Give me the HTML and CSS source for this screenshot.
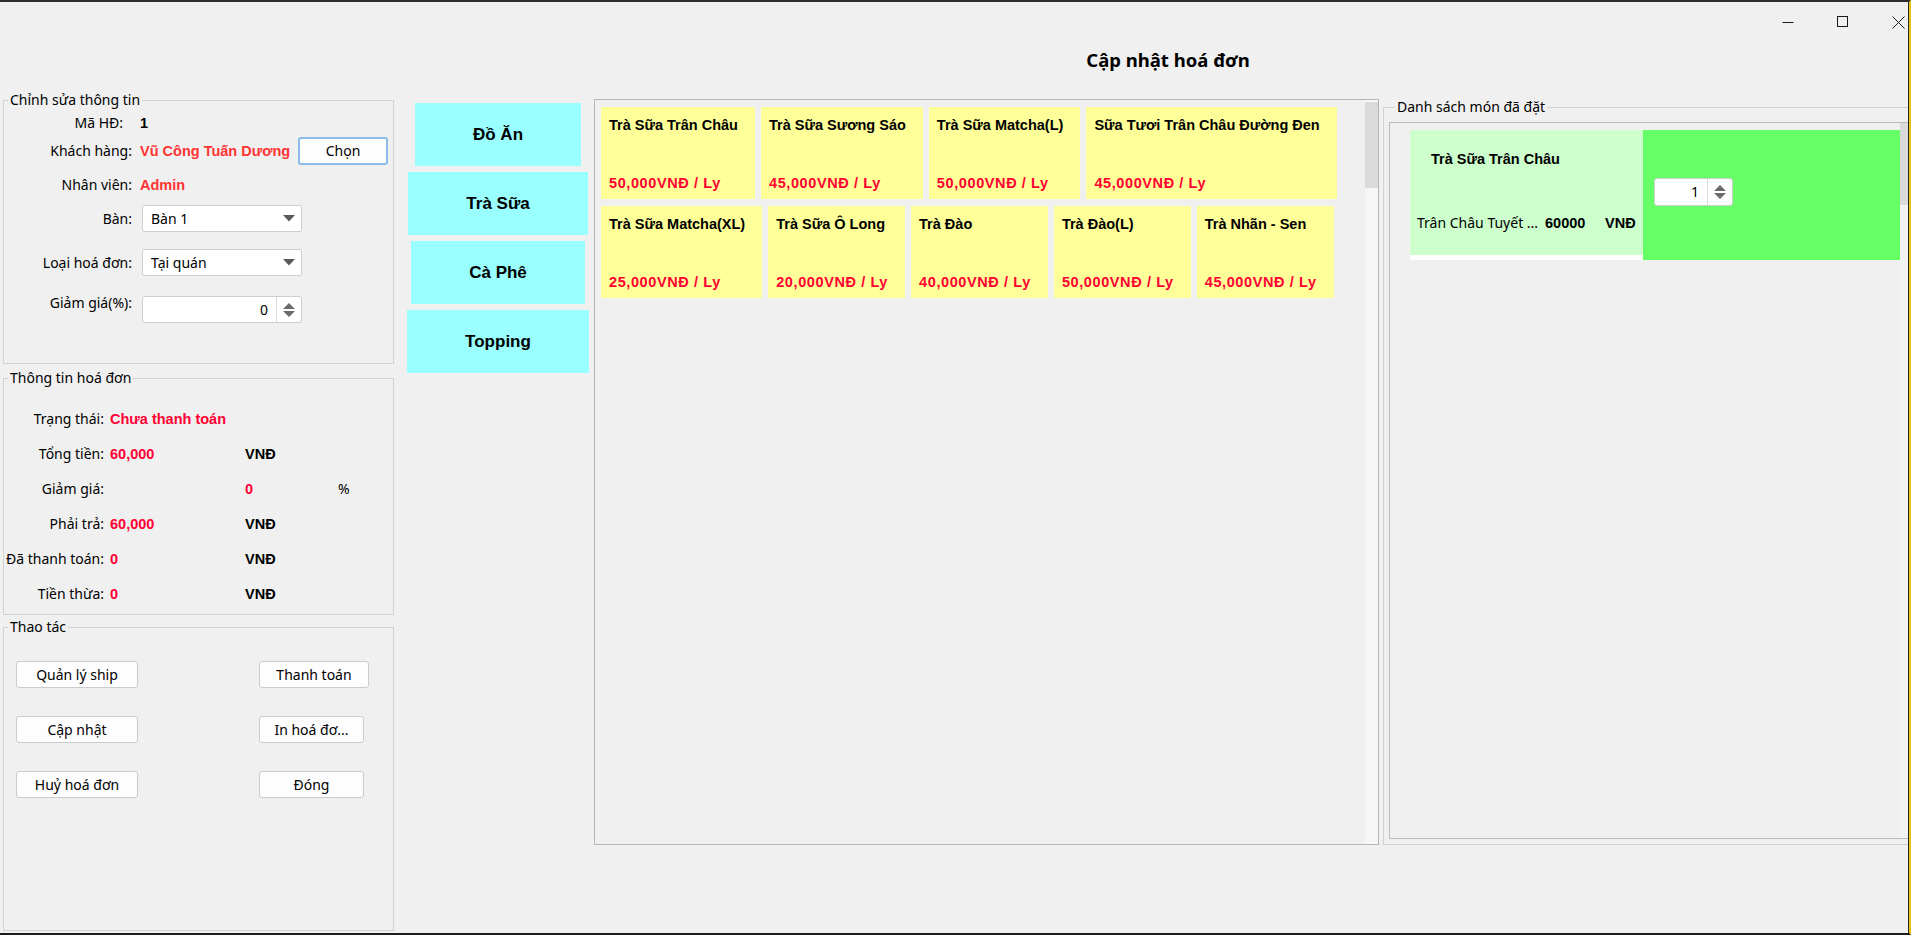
FILE: index.html
```html
<!DOCTYPE html>
<html lang="vi">
<head>
<meta charset="utf-8">
<title>Cập nhật hoá đơn</title>
<link rel="stylesheet" href="styles.css">
</head>
<body>
<div class="window">
  <div class="frame">
    <div class="titlebar">
      <div class="winctl">
        <span class="ctl"><svg width="12" height="12" viewBox="0 0 12 12"><path d="M0.5 6.5H11.5" stroke="#1a1a1a" stroke-width="1"/></svg></span>
        <span class="ctl"><svg width="12" height="12" viewBox="0 0 12 12"><rect x="0.5" y="0.5" width="10" height="10" fill="none" stroke="#1a1a1a" stroke-width="1"/></svg></span>
        <span class="ctl"><svg width="13" height="13" viewBox="0 0 13 13"><path d="M0.5 0.5L12.5 12.5M12.5 0.5L0.5 12.5" stroke="#1a1a1a" stroke-width="1"/></svg></span>
      </div>
    </div>
    <h1 class="title">Cập nhật hoá đơn</h1>
    <div class="main">
      <div class="left-col">
        <fieldset class="group g-edit">
          <legend>Chỉnh sửa thông tin</legend>
          <div class="frow r1"><span class="flabel flabel-code">Mã HĐ:</span><span class="val">1</span></div>
          <div class="frow r2"><span class="flabel">Khách hàng:</span><span class="val red-light val-name">Vũ Công Tuấn Dương</span><button class="btn btn-choose">Chọn</button></div>
          <div class="frow r3"><span class="flabel">Nhân viên:</span><span class="val red-light">Admin</span></div>
          <div class="frow r4"><span class="flabel">Bàn:</span>
            <div class="combo"><span>Bàn 1</span><svg class="caret" width="12" height="7" viewBox="0 0 12 7"><path d="M0 0H12L6 6.5Z" fill="#5a5a5a"/></svg></div>
          </div>
          <div class="frow r5"><span class="flabel">Loại hoá đơn:</span>
            <div class="combo"><span>Tại quán</span><svg class="caret" width="12" height="7" viewBox="0 0 12 7"><path d="M0 0H12L6 6.5Z" fill="#5a5a5a"/></svg></div>
          </div>
          <div class="frow r6"><span class="flabel flabel-top">Giảm giá(%):</span>
            <div class="spinner spinner-wide"><span class="spin-val">0</span><span class="spin-btn"><svg width="12" height="14" viewBox="0 0 12 14"><path d="M6 0L12 6H0Z M0 8H12L6 14Z" fill="#6b6b6b"/></svg></span></div>
          </div>
        </fieldset>

        <fieldset class="group g-info">
          <legend>Thông tin hoá đơn</legend>
          <div class="info-grid">
            <span class="ilabel">Trạng thái:</span><span class="ival red span3">Chưa thanh toán</span>
            <span class="ilabel">Tổng tiền:</span><span class="ival red">60,000</span><span class="unit">VNĐ</span><span></span>
            <span class="ilabel">Giảm giá:</span><span></span><span class="ival red">0</span><span class="pct">%</span>
            <span class="ilabel">Phải trả:</span><span class="ival red">60,000</span><span class="unit">VNĐ</span><span></span>
            <span class="ilabel">Đã thanh toán:</span><span class="ival red">0</span><span class="unit">VNĐ</span><span></span>
            <span class="ilabel">Tiền thừa:</span><span class="ival red">0</span><span class="unit">VNĐ</span><span></span>
          </div>
        </fieldset>

        <fieldset class="group g-actions">
          <legend>Thao tác</legend>
          <div class="action-grid">
            <button class="btn btn-left">Quản lý ship</button><button class="btn btn-right-wide">Thanh toán</button>
            <button class="btn btn-left">Cập nhật</button><button class="btn btn-right">In hoá đơ...</button>
            <button class="btn btn-left">Huỷ hoá đơn</button><button class="btn btn-right">Đóng</button>
          </div>
        </fieldset>
      </div>

      <div class="cats">
        <button class="cat">Đồ Ăn</button>
        <button class="cat">Trà Sữa</button>
        <button class="cat">Cà Phê</button>
        <button class="cat">Topping</button>
      </div>

      <div class="products">
        <div class="product-list">
          <div class="card"><span>Trà Sữa Trân Châu</span><span class="price">50,000VNĐ / Ly</span></div>
          <div class="card"><span>Trà Sữa Sương Sáo</span><span class="price">45,000VNĐ / Ly</span></div>
          <div class="card"><span>Trà Sữa Matcha(L)</span><span class="price">50,000VNĐ / Ly</span></div>
          <div class="card"><span>Sữa Tươi Trân Châu Đường Đen</span><span class="price">45,000VNĐ / Ly</span></div>
          <div class="card"><span>Trà Sữa Matcha(XL)</span><span class="price">25,000VNĐ / Ly</span></div>
          <div class="card"><span>Trà Sữa Ô Long</span><span class="price">20,000VNĐ / Ly</span></div>
          <div class="card"><span>Trà Đào</span><span class="price">40,000VNĐ / Ly</span></div>
          <div class="card"><span>Trà Đào(L)</span><span class="price">50,000VNĐ / Ly</span></div>
          <div class="card"><span>Trà Nhãn - Sen</span><span class="price">45,000VNĐ / Ly</span></div>
        </div>
        <div class="vscroll"><div class="thumb"></div></div>
      </div>

      <fieldset class="group g-order">
        <legend>Danh sách món đã đặt</legend>
        <div class="order-panel">
          <div class="order-list">
            <div class="order-item">
              <div class="oi-info">
                <div class="oi-name">Trà Sữa Trân Châu</div>
                <div class="oi-detail"><span class="oi-topping">Trân Châu Tuyết ...</span><span class="oi-price">60000</span><span class="oi-unit">VNĐ</span></div>
              </div>
              <div class="oi-qty">
                <div class="spinner spinner-sm"><span class="spin-val">1</span><span class="spin-btn"><svg width="12" height="14" viewBox="0 0 12 14"><path d="M6 0L12 6H0Z M0 8H12L6 14Z" fill="#6b6b6b"/></svg></span></div>
              </div>
            </div>
          </div>
          <div class="vscroll vscroll-order"><div class="thumb"></div></div>
        </div>
      </fieldset>
    </div>
  </div>
</div>
</body>
</html>
```

FILE: styles.css
```css
* { box-sizing: border-box; margin: 0; padding: 0; }
html, body { width: 1911px; height: 935px; overflow: hidden; }
body {
  background: #f0f0f0;
  font-family: "Noto Sans", "Liberation Sans", sans-serif;
  font-size: 14px;
  line-height: 18px;
  color: #000;
}

.window {
  width: 1911px;
  height: 935px;
  border-top: 2px solid #2d2d2d;
  border-bottom: 2px solid #1c1c1c;
  border-right: 2px solid #e6c21b;
  background: #f0f0f0;
}
.frame {
  height: 100%;
  border-right: 1px solid #2a2a2a;
  overflow: hidden;
  display: flex;
  flex-direction: column;
}

.titlebar {
  height: 40px;
  flex-shrink: 0;
  display: flex;
  justify-content: flex-end;
  align-items: center;
}
.winctl { display: flex; gap: 35px; }
.ctl { width: 20px; height: 20px; display: flex; align-items: center; justify-content: center; }

.title {
  height: 36px;
  flex-shrink: 0;
  line-height: 36px;
  font-size: 18.5px;
  font-weight: 700;
  text-align: center;
  padding-left: 428px;
}

.main {
  flex: 1;
  min-height: 0;
  display: flex;
  align-items: flex-start;
  padding-top: 13px;
}

/* ---------- fieldsets ---------- */
.group {
  border: 1px solid #d2d2d2;
  min-width: 0;
}
.group legend {
  margin-left: 4px;
  padding: 0 2px;
  font-size: 14px;
  line-height: 18px;
}

.left-col {
  margin-left: 3px;
  width: 391px;
  flex-shrink: 0;
  display: flex;
  flex-direction: column;
}
.g-edit { height: 273px; }
.g-info { height: 246px; margin-top: 5px; }
.g-actions { height: 313px; margin-top: 3px; }

/* edit form */
.frow { display: flex; align-items: center; }
.r1, .r2 { height: 28px; }
.r3 { height: 40px; }
.r4 { height: 27px; }
.r5 { height: 27px; margin-top: 17px; }
.r6 { height: 27px; margin-top: 20px; align-items: flex-start; }

.flabel { width: 128px; margin-right: 8px; text-align: right; flex-shrink: 0; white-space: nowrap; }
.flabel-code { width: 119px; margin-right: 17px; }
.flabel-top { margin-top: -2px; }

.val {
  font-family: "Liberation Sans", sans-serif;
  font-weight: 700;
  font-size: 14.5px;
  white-space: nowrap;
}
.val-name { width: 158px; flex-shrink: 0; }
.red-light { color: #ff3333; }
.red { color: #ff0033; }

.btn {
  font-family: "Noto Sans", sans-serif;
  font-size: 14px;
  line-height: 18px;
  color: #000;
  background: #fdfdfd;
  border: 1px solid #cbcbcb;
  border-radius: 3px;
  height: 27px;
  display: flex;
  align-items: center;
  justify-content: center;
  white-space: nowrap;
}
.btn-choose {
  width: 90px;
  height: 28px;
  border: 2px solid #8dbbea;
  border-radius: 3px;
}

.combo {
  margin-left: 2px;
  width: 160px;
  height: 27px;
  background: #fff;
  border: 1px solid #cfcfcf;
  border-radius: 2px;
  display: flex;
  align-items: center;
  justify-content: space-between;
  padding: 0 6px 0 8px;
}

.spinner {
  display: flex;
  background: #fff;
  border: 1px solid #cdcdcd;
  border-radius: 3px;
  height: 27px;
}
.spin-val { flex: 1; text-align: right; padding-right: 8px; align-self: center; }
.spin-btn {
  width: 25px;
  border-left: 1px solid #dadada;
  display: flex;
  align-items: center;
  justify-content: center;
}
.spinner-wide { margin-left: 2px; width: 160px; }
.spinner-sm { width: 79px; height: 28px; }

/* invoice info */
.info-grid {
  display: grid;
  grid-template-columns: 106px 135px 93px 1fr;
  grid-auto-rows: 35px;
  align-items: center;
  margin-top: 14px;
}
.ilabel { text-align: right; padding-right: 6px; white-space: nowrap; }
.ival, .unit {
  font-family: "Liberation Sans", sans-serif;
  font-weight: 700;
  font-size: 14.5px;
  white-space: nowrap;
}
.span3 { grid-column: span 3; }

/* actions */
.action-grid {
  display: grid;
  grid-template-columns: 122px 110px;
  column-gap: 121px;
  row-gap: 28px;
  justify-items: start;
  padding-left: 12px;
  margin-top: 25px;
}
.btn-left { width: 122px; }
.btn-right-wide { width: 110px; }
.btn-right { width: 105px; }

/* ---------- categories ---------- */
.cats {
  margin-left: 11px;
  margin-top: 12px;
  width: 186px;
  flex-shrink: 0;
  display: flex;
  flex-direction: column;
  align-items: center;
  gap: 6px;
}
.cat {
  height: 63px;
  padding: 0 58px;
  background: #99ffff;
  border: none;
  color: #000;
  font-family: "Liberation Sans", sans-serif;
  font-weight: 700;
  font-size: 17px;
  white-space: nowrap;
}

/* ---------- products ---------- */
.products {
  margin-left: 3px;
  margin-top: 8px;
  width: 785px;
  height: 746px;
  flex-shrink: 0;
  border: 1px solid #b5b5b5;
  display: flex;
}
.product-list {
  flex: 1;
  display: flex;
  flex-wrap: wrap;
  align-content: flex-start;
  column-gap: 6px;
  row-gap: 7px;
  padding: 7px 0 0 6px;
}
.card {
  height: 92px;
  background: #ffff99;
  padding: 9px 17px 7px 8px;
  display: flex;
  flex-direction: column;
  justify-content: space-between;
  font-family: "Liberation Sans", sans-serif;
  font-weight: 700;
  font-size: 14.5px;
  line-height: 18px;
  white-space: nowrap;
}
.card .price { color: #ff0033; letter-spacing: 0.6px; }

.vscroll { width: 13px; flex-shrink: 0; background: #f6f6f6; }
.vscroll .thumb { margin-top: 2px; height: 86px; background: #dadada; }

/* ---------- ordered list ---------- */
.g-order {
  margin-left: 4px;
  margin-top: 7px;
  width: 560px;
  height: 747px;
  flex-shrink: 0;
  padding: 6px 0 5px 5px;
}
.g-order legend { margin-left: 6px; }
.order-panel {
  width: 545px;
  height: 717px;
  border: 1px solid #bcbcbc;
  display: flex;
}
.order-list {
  width: 510px;
  flex-shrink: 0;
  padding: 7px 0 0 20px;
}
.order-item { display: flex; width: 490px; }
.oi-info {
  width: 233px;
  height: 130px;
  background: #ccffcc;
  border-bottom: 5px solid #ffffff;
}
.oi-name {
  padding: 20px 0 0 21px;
  font-family: "Liberation Sans", sans-serif;
  font-weight: 700;
  font-size: 14.5px;
  white-space: nowrap;
}
.oi-detail {
  display: flex;
  margin-top: 46px;
  padding-left: 7px;
  white-space: nowrap;
}
.oi-topping { width: 128px; overflow: hidden; }
.oi-price, .oi-unit {
  font-family: "Liberation Sans", sans-serif;
  font-weight: 700;
  font-size: 14.5px;
}
.oi-price { width: 60px; }
.oi-qty {
  width: 257px;
  height: 130px;
  background: #66ff66;
  padding: 48px 0 0 11px;
}
.vscroll-order { width: 17px; background: #f3f3f3; }
.vscroll-order .thumb { margin-top: 0; height: 82px; background: #dadada; }
```
